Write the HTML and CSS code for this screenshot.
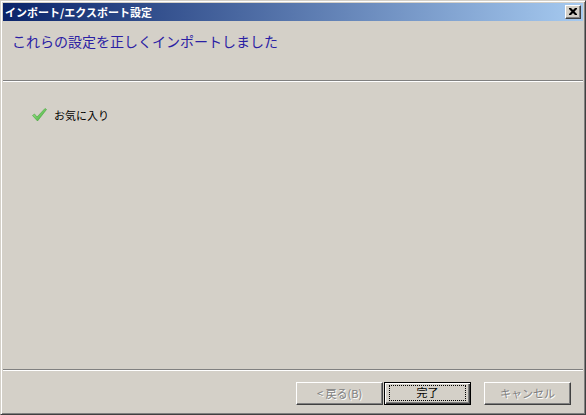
FILE: index.html
```html
<!DOCTYPE html>
<html lang="ja">
<head>
  <meta charset="UTF-8">
  <title>インポート/エクスポート設定</title>
  <link rel="stylesheet" href="styles.css">
</head>
<body>

<div class="window">
  <div class="titlebar">
    <span class="title">インポート/エクスポート設定</span>
    <span class="close-btn">
      <svg width="8" height="7" viewBox="0 0 8 7">
        <path d="M0 0h2l2 2 2-2h2v1l-2.5 2.5L8 6v1H6L4 5 2 7H0V6l2.5-2.5L0 1z" fill="#000"/>
      </svg>
    </span>
  </div>

  <div class="header">
    <h1>これらの設定を正しくインポートしました</h1>
  </div>
  <div class="separator"></div>

  <div class="content">
    <div class="result-item">
      <svg class="check" width="15" height="14" viewBox="0 0 15 14">
        <defs>
          <linearGradient id="g" x1="0" y1="0" x2="1" y2="1">
            <stop offset="0" stop-color="#a8ec96"/>
            <stop offset="1" stop-color="#38a830"/>
          </linearGradient>
        </defs>
        <path d="M0.5 7.5 L2.5 6 L5 9 L13 0.5 L14.5 1.5 L5.5 13 Z" fill="url(#g)" stroke="#46a43c" stroke-width="0.6"/>
      </svg>
      <span>お気に入り</span>
    </div>
  </div>
  <div class="separator"></div>

  <div class="footer">
    <button class="btn" disabled>&lt; 戻る(B)</button>
    <button class="btn btn-default"><span class="focus">完了</span></button>
    <button class="btn btn-cancel" disabled>キャンセル</button>
  </div>
</div>

</body>
</html>
```

FILE: styles.css
```css
body {
  margin: 0;
  padding: 0;
  background-color: #d4d0c8;
  font-family: "Noto Sans CJK JP", "Noto Sans", sans-serif;
  font-size: 11px;
}
.window {
  width: 586px;
  height: 415px;
  box-sizing: border-box;
  display: flex;
  flex-direction: column;
  padding: 2px;
  background-color: #d4d0c8;
  border: 1px solid;
  border-color: #d4d0c8 #404040 #404040 #d4d0c8;
  box-shadow: inset 1px 1px #fff, inset -1px -1px #808080;
}
.titlebar {
  height: 18px;
  flex-shrink: 0;
  display: flex;
  align-items: center;
  justify-content: space-between;
  padding: 0 2px;
  background: linear-gradient(to right, #0a246a, #a6caf0);
}
.title {
  color: #fff;
  font-weight: bold;
  font-size: 11px;
  line-height: 18px;
}
.close-btn {
  width: 16px;
  height: 14px;
  box-sizing: border-box;
  display: flex;
  align-items: center;
  justify-content: center;
  background-color: #d4d0c8;
  border: 1px solid;
  border-color: #fff #404040 #404040 #fff;
  box-shadow: inset -1px -1px #808080;
}
.close-btn svg {
  margin: 0 1px 1px 0;
}
.header {
  height: 59px;
  flex-shrink: 0;
  padding: 11px 9px 0;
  box-sizing: border-box;
}
h1 {
  margin: 0;
  font-size: 14px;
  font-weight: normal;
  line-height: 18px;
  color: #2a20a4;
}
.separator {
  height: 1px;
  flex-shrink: 0;
  background-color: #808080;
  border-bottom: 1px solid #fff;
}
.content {
  flex: 1;
  padding: 25px 29px 0;
}
.result-item {
  display: flex;
  align-items: center;
  gap: 7px;
  height: 16px;
  color: #000;
}
.check {
  flex-shrink: 0;
}
.footer {
  height: 41px;
  flex-shrink: 0;
  display: flex;
  justify-content: flex-end;
  align-items: flex-start;
  box-sizing: border-box;
  padding: 11px 12px 0 0;
}
.btn {
  width: 87px;
  height: 23px;
  box-sizing: border-box;
  margin: 0;
  padding: 0 0 2px;
  font-family: inherit;
  font-size: 11px;
  color: #000;
  background-color: #d4d0c8;
  border: 1px solid;
  border-color: #fff #404040 #404040 #fff;
  box-shadow: inset -1px -1px #808080;
}
.btn:disabled {
  color: #808080;
  text-shadow: 1px 1px #fff;
}
.btn-default {
  margin-left: 1px;
  padding: 0;
  border: 1px solid #000;
  box-shadow: inset 1px 1px #fff, inset -1px -1px #404040, inset -2px -2px #808080;
}
.focus {
  display: block;
  margin: 2px 4px 4px 4px;
  height: 14px;
  line-height: 13px;
  border: 1px dotted #000;
}
.btn-cancel {
  margin-left: 13px;
}
```
